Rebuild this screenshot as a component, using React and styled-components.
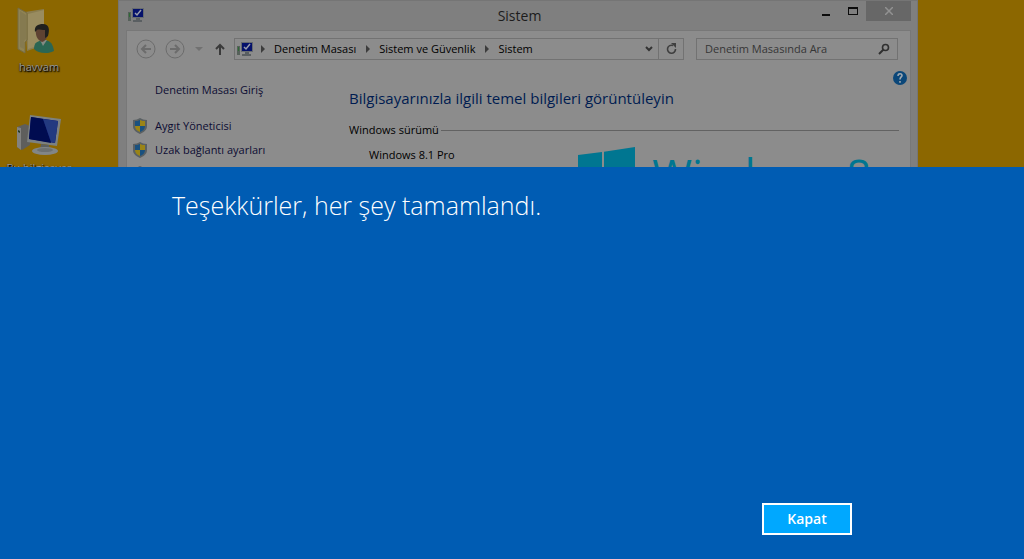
import React, { useState } from 'react';
import styled, { createGlobalStyle } from 'styled-components';

const colors = {
    desktop: '#8c6700',
    frame: '#7f7f7f',
    client: '#8c8c8c',
    line: '#727272',
    link: '#0c0c33',
    heading: '#001c51',
    brand: '#007691',
    panel: '#005cb3',
    accent: '#00a8ff'
};

const GlobalStyle = createGlobalStyle`
    * {
        box-sizing: border-box;
    }
    body {
        margin: 0;
        font: 11px/16px "Open Sans", "Noto Sans", sans-serif;
        color: #000;
    }
    button, input {
        font: inherit;
        color: inherit;
    }
    svg {
        display: block;
        flex: none;
    }
`;

const Screen = styled.div`
    display: flex;
    flex-direction: column;
    min-height: 100vh;
`;

const Desktop = styled.div`
    display: flex;
    height: 167px;
    padding-right: 106px;
    overflow: hidden;
    background: ${colors.desktop};
`;

const Shortcuts = styled.div`
    display: flex;
    flex: none;
    flex-direction: column;
    align-items: center;
    gap: 40px;
    width: 78px;
    margin-right: 40px;
    padding-top: 6px;
`;

const Shortcut = styled.a`
    display: flex;
    flex-direction: column;
    align-items: center;
    gap: 3px;
    color: #969696;
    text-decoration: none;
    text-shadow: 0 1px 2px #000, 1px 1px 1px #000;
    white-space: nowrap;
`;

const Window = styled.section`
    display: flex;
    flex: 1;
    flex-direction: column;
    min-width: 0;
    height: 400px;
    padding: 0 6px 0 7px;
    background: ${colors.frame};
    border: 1px solid #757575;
`;

const TitleBar = styled.header`
    display: grid;
    flex: none;
    grid-template-columns: 1fr auto 1fr;
    height: 29px;
    padding-left: 2px;
`;

const TitleIcon = styled.div`
    padding-top: 7px;
`;

const Title = styled.h1`
    margin: 0;
    color: #1c1c1c;
    font-size: 14px;
    font-weight: 400;
    line-height: 29px;
`;

const Controls = styled.div`
    display: flex;
    justify-content: flex-end;
`;

const ControlButton = styled.button`
    display: flex;
    align-items: center;
    justify-content: center;
    width: ${props => (props.$close ? 45 : 27)}px;
    height: 20px;
    padding: 0;
    background: ${props => (props.$close ? '#676767' : 'transparent')};
    border: 0;
`;

const Client = styled.div`
    flex: 1;
    background: ${colors.client};
    border: 1px solid #787878;
    border-bottom: 0;
`;

const NavBar = styled.nav`
    display: flex;
    align-items: center;
    height: 36px;
    padding: 0 12px 0 9px;
`;

const NavButton = styled.button`
    display: flex;
    flex: none;
    align-items: center;
    justify-content: center;
    width: ${props => props.$width}px;
    height: 22px;
    padding: 0;
    background: none;
    border: 0;
`;

const Address = styled.div`
    display: flex;
    flex: 1;
    align-items: center;
    height: 22px;
    margin-right: 12px;
    padding-left: 2px;
    border: 1px solid ${colors.line};
`;

const Crumbs = styled.ol`
    display: flex;
    flex: 1;
    margin: 0;
    padding: 0;
    list-style: none;
`;

const Crumb = styled.li`
    display: flex;
    align-items: center;
    white-space: nowrap;
    & svg {
        margin: 0 9px 0 8px;
    }
    & + & svg {
        margin-left: 10px;
    }
    & a {
        color: #000;
        text-decoration: none;
    }
`;

const RefreshButton = styled(NavButton)`
    height: 20px;
    border-left: 1px solid ${colors.line};
`;

const Search = styled.label`
    display: flex;
    align-items: center;
    width: 202px;
    height: 22px;
    padding: 0 7px 0 8px;
    border: 1px solid ${colors.line};
`;

const SearchInput = styled.input`
    flex: 1;
    min-width: 0;
    padding: 0;
    background: none;
    border: 0;
    outline: 0;
    &::placeholder {
        color: #363636;
        opacity: 1;
    }
`;

const Content = styled.div`
    display: grid;
    grid-template-columns: 222px 1fr;
`;

const Sidebar = styled.aside`
    padding: 15px 0 0 6px;
`;

const SideLink = styled.a`
    display: grid;
    grid-template-columns: 14px 1fr;
    gap: 8px;
    align-items: center;
    height: 16px;
    margin-bottom: ${props => (props.$home ? 20 : 8)}px;
    color: ${colors.link};
    text-decoration: none;
    & span {
        grid-column: 2;
    }
`;

const Main = styled.main`
    padding: 4px 11px 0 0;
`;

const HelpRow = styled.div`
    display: flex;
    justify-content: flex-end;
    margin-right: -8px;
`;

const HelpButton = styled.button`
    width: 14px;
    height: 14px;
    padding: 0;
    background: none;
    border: 0;
`;

const Heading = styled.h2`
    margin: 3px 0 14px;
    color: ${colors.heading};
    font-size: 15px;
    font-weight: 400;
    line-height: 20px;
    white-space: nowrap;
`;

const Legend = styled.h3`
    display: flex;
    align-items: center;
    gap: 2px;
    margin: 0;
    font-size: 11px;
    font-weight: 400;
    &::after {
        content: '';
        flex: 1;
        height: 1px;
        background: #626262;
    }
`;

const Edition = styled.div`
    display: flex;
    justify-content: space-between;
    padding: 9px 28px 0 20px;
`;

const Brand = styled.div`
    display: flex;
    gap: 17px;
    color: ${colors.brand};
    font-size: 43px;
    line-height: 56px;
    white-space: nowrap;
`;

const Panel = styled.section`
    display: flex;
    flex: 1;
    flex-direction: column;
    align-items: flex-start;
    justify-content: space-between;
    padding: 20px 172px 24px;
    background: ${colors.panel};
`;

const Message = styled.p`
    margin: 0;
    color: #fff;
    font-size: 25px;
    font-weight: 300;
    line-height: 36px;
`;

const CloseButton = styled.button`
    align-self: flex-end;
    width: 90px;
    height: 32px;
    padding: 0;
    background: ${colors.accent};
    border: 2px solid #fff;
    color: #fff;
    font-size: 14px;
    font-weight: 600;
    line-height: 20px;
`;

const UserFolderIcon = () => (
    <svg width="44" height="50" viewBox="0 0 44 50">
        <path d="M8 6l19-3v36l-17 6z" fill="#8a7d50" />
        <path d="M11 8l16-4v34l-16 5z" fill="#998c60" />
        <path d="M1 2l9 5v27l-2 2v11l-7-4z" fill="#8f8354" stroke="#776c43" strokeWidth="1" />
        <path d="M3 5l6 4v24l-2 2v8l-4-2z" fill="#857a50" />
        <path d="M17 43c0-7 4-8 10-9 7 0 9 5 10 11-5 3-16 3-20-2z" fill="#2b6653" />
        <path d="M23 34l3 6 4-6z" fill="#848a83" />
        <path d="M19 22c-1 7 1 12 6 14 4-1 7-6 6-13l-6-4z" fill="#5e4232" />
        <path d="M18 26c-1-6 3-8 8-8 6 0 7 5 5 12l-3 2v-8c-4 0-7-1-8 0z" fill="#20201e" />
    </svg>
);

const ComputerIcon = () => (
    <svg width="46" height="42" viewBox="0 0 46 42">
        <path d="M1 12l8-3 5 2v19l-8 5-5-3z" fill="#5e5e5c" />
        <path d="M1 12l4 1v22l-4-3z" fill="#828280" />
        <path d="M2 15l2 1v2l-2-1z" fill="#263b24" />
        <path d="M14 0l31 4-4 27-30-4z" fill="#7c8181" />
        <path d="M15 2l27 4-3 22-26-4z" fill="#08126e" />
        <path d="M15 2l12 2 8 24-22-4z" fill="#000c50" />
        <path d="M27 4l15 2-3 22-4-1z" fill="#233a80" />
        <path d="M25 29l8 1 1 5h-10z" fill="#5c6060" />
        <ellipse cx="29" cy="36" rx="13" ry="4" fill="#828686" />
        <ellipse cx="29" cy="35" rx="8" ry="2" fill="#6d7171" />
    </svg>
);

const SystemIcon = () => (
    <svg width="16" height="15" viewBox="0 0 16 15">
        <path d="M0 4h3v9H0z" fill="#56615a" />
        <path d="M1 5h1v4H1z" fill="#2f6a35" />
        <path d="M4 0h12v10H4z" fill="#666b70" />
        <path d="M5 1h10v8H5z" fill="#05116b" />
        <path d="M7 5l2 2 4-5" fill="none" stroke="#999dac" strokeWidth="1.5" />
        <path d="M8 10h4v2h2v2H5v-2h3z" fill="#5a5f62" />
    </svg>
);

const CircleArrow = ({ forward }) => (
    <svg width="20" height="20" viewBox="0 0 20 20" fill="none" stroke="#6c6c6c">
        <circle cx="10" cy="10" r="9" />
        <path
            d={forward ? 'M5 10h9M10 6l4 4-4 4' : 'M15 10H6M10 6l-4 4 4 4'}
            strokeWidth="2"
        />
    </svg>
);

const CrumbArrow = () => (
    <svg width="4" height="8" viewBox="0 0 4 8">
        <path d="M0 0l4 4-4 4z" fill="#3c3c3c" />
    </svg>
);

const ShieldIcon = () => (
    <svg width="14" height="16" viewBox="0 0 14 16">
        <path d="M7 0c2 1 4 2 7 2v6c0 4-3 6-7 8-4-2-7-4-7-8V2c3 0 5-1 7-2z" fill="#5a6063" />
        <path d="M7 2v6H2V3c2 0 3 0 5-1z" fill="#19517f" />
        <path d="M7 2v6h5V3c-2 0-3 0-5-1z" fill="#9a8416" />
        <path d="M7 14V8H2c0 3 2 5 5 6z" fill="#9a8416" />
        <path d="M7 14V8h5c0 3-2 5-5 6z" fill="#19517f" />
    </svg>
);

const HelpIcon = () => (
    <svg width="14" height="14" viewBox="0 0 14 14">
        <circle cx="7" cy="7" r="7" fill="#0b4779" />
        <path
            d="M5 5c0-3 4-3 4-.5C9 6 7 6 7 8.500M7 10v1.800"
            fill="none"
            stroke="#a0a8b0"
            strokeWidth="1.600"
        />
    </svg>
);

const WindowsLogo = () => (
    <svg width="57" height="57" viewBox="0 0 57 57" fill="currentColor">
        <path d="M0 8l24-3v22H0zM26 4.700L57 0v27H26zM0 29h24v22L0 48zM26 29h31v28l-31-4z" />
    </svg>
);

const crumbs = ['Denetim Masası', 'Sistem ve Güvenlik', 'Sistem'];
const sideLinks = ['Aygıt Yöneticisi', 'Uzak bağlantı ayarları', 'Sistem koruması'];

const SystemWindow = () => {
    const [query, setQuery] = useState('');

    return (
        <Window>
            <TitleBar>
                <TitleIcon><SystemIcon /></TitleIcon>
                <Title>Sistem</Title>
                <Controls>
                    <ControlButton aria-label="Simge durumuna küçült">
                        <svg width="8" height="10" viewBox="0 0 8 10">
                            <path d="M0 8h8v2H0z" fill="#0c0c0c" />
                        </svg>
                    </ControlButton>
                    <ControlButton aria-label="Ekranı kapla">
                        <svg width="10" height="8" viewBox="0 0 10 8">
                            <path d="M0 0h10v8H0zM1 2v5h8V2z" fill="#0c0c0c" fillRule="evenodd" />
                        </svg>
                    </ControlButton>
                    <ControlButton $close aria-label="Pencereyi kapat">
                        <svg width="8" height="8" viewBox="0 0 8 8">
                            <path d="M0 0l8 8M8 0L0 8" stroke="#929292" strokeWidth="1.500" />
                        </svg>
                    </ControlButton>
                </Controls>
            </TitleBar>
            <Client>
                <NavBar>
                    <NavButton $width={20} aria-label="Geri"><CircleArrow /></NavButton>
                    <NavButton $width={38} aria-label="İleri"><CircleArrow forward /></NavButton>
                    <NavButton $width={10} aria-label="Son sayfalar">
                        <svg width="8" height="4" viewBox="0 0 8 4">
                            <path d="M0 0h8L4 4z" fill="#717171" />
                        </svg>
                    </NavButton>
                    <NavButton $width={30} aria-label="Yukarı">
                        <svg width="12" height="12" viewBox="0 0 12 12">
                            <path d="M7 12V2M3 6l4-4 4 4" fill="none" stroke="#3a3a3a" strokeWidth="2" />
                        </svg>
                    </NavButton>
                    <Address>
                        <SystemIcon />
                        <Crumbs>
                            {crumbs.map(name => (
                                <Crumb key={name}>
                                    <CrumbArrow />
                                    <a href="#">{name}</a>
                                </Crumb>
                            ))}
                        </Crumbs>
                        <NavButton $width={18} aria-label="Önceki konumlar">
                            <svg width="8" height="6" viewBox="0 0 8 6">
                                <path d="M1 1l3 3 3-3" fill="none" stroke="#333" strokeWidth="2" />
                            </svg>
                        </NavButton>
                        <RefreshButton $width={25} aria-label="Yenile">
                            <svg width="11" height="12" viewBox="0 0 11 12">
                                <path d="M7 2.500A4 4 0 1 0 9.500 6" fill="none" stroke="#3f3f3f" strokeWidth="1.600" />
                                <path d="M5 0h5v5z" fill="#3f3f3f" />
                            </svg>
                        </RefreshButton>
                    </Address>
                    <Search>
                        <SearchInput
                            aria-label="Denetim Masasında Ara"
                            placeholder="Denetim Masasında Ara"
                            value={query}
                            onChange={e => setQuery(e.target.value)}
                        />
                        <svg width="12" height="12" viewBox="0 0 12 12" fill="none" stroke="#303030">
                            <circle cx="7.500" cy="4.500" r="3" strokeWidth="1.600" />
                            <path d="M5.500 6.500L1 11" strokeWidth="2" />
                        </svg>
                    </Search>
                </NavBar>
                <Content>
                    <Sidebar>
                        <SideLink href="#" $home><span>Denetim Masası Giriş</span></SideLink>
                        {sideLinks.map(name => (
                            <SideLink href="#" key={name}>
                                <ShieldIcon />
                                <span>{name}</span>
                            </SideLink>
                        ))}
                    </Sidebar>
                    <Main>
                        <HelpRow>
                            <HelpButton aria-label="Yardım"><HelpIcon /></HelpButton>
                        </HelpRow>
                        <Heading>Bilgisayarınızla ilgili temel bilgileri görüntüleyin</Heading>
                        <Legend>Windows sürümü</Legend>
                        <Edition>
                            <span>Windows 8.1 Pro</span>
                            <Brand>
                                <WindowsLogo />
                                <span>Windows 8</span>
                            </Brand>
                        </Edition>
                    </Main>
                </Content>
            </Client>
        </Window>
    );
};

const App = () => {
    const [open, setOpen] = useState(true);

    return (
        <Screen>
            <GlobalStyle />
            <Desktop>
                <Shortcuts>
                    <Shortcut href="#">
                        <UserFolderIcon />
                        havvam
                    </Shortcut>
                    <Shortcut href="#">
                        <ComputerIcon />
                        Bu bilgisayar
                    </Shortcut>
                </Shortcuts>
                <SystemWindow />
            </Desktop>
            {open &&
                <Panel>
                    <Message>Teşekkürler, her şey tamamlandı.</Message>
                    <CloseButton onClick={() => setOpen(false)}>Kapat</CloseButton>
                </Panel>
            }
        </Screen>
    );
};

export default App;
